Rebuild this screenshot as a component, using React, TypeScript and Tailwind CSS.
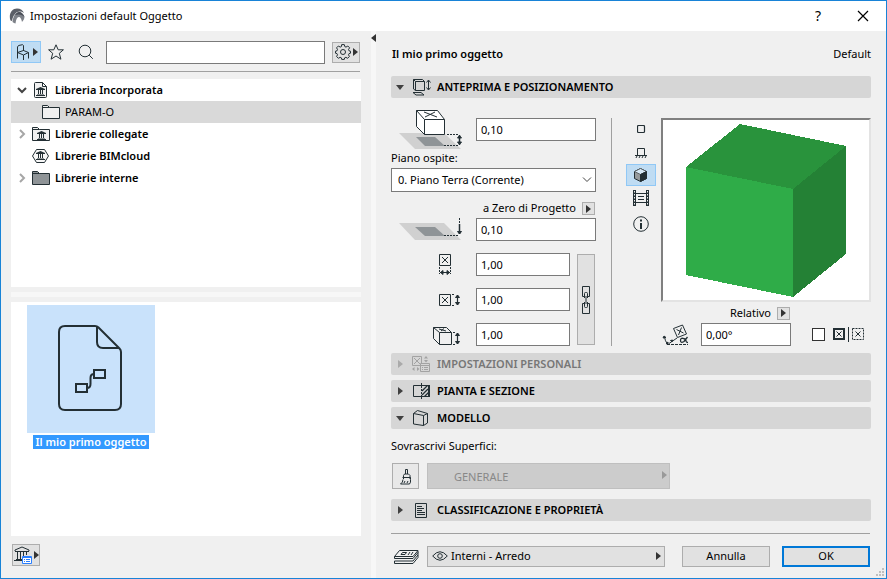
import React from "react";
import { clsx } from "clsx";

type IconProps = {
  w: number;
  h: number;
  className?: string;
  children: React.ReactNode;
};

const Icon = ({ w, h, className, children }: IconProps) => (
  <svg
    width={w}
    height={h}
    viewBox={`0 0 ${w} ${h}`}
    fill="none"
    stroke="currentColor"
    aria-hidden="true"
    className={clsx("shrink-0", className)}
  >
    {children}
  </svg>
);

const Right = ({ className }: { className?: string }) => (
  <Icon w={5} h={8} className={className}>
    <path d="M0 0v8l5-4z" fill="currentColor" stroke="none" />
  </Icon>
);

const Museum = ({ x, y }: { x: number; y: number }) => (
  <g transform={`translate(${x} ${y})`}>
    <path d="M0 3V2l4.500-2L9 2v1z" fill="currentColor" stroke="none" />
    <path d="M2.500 3v4M4.500 3v4M6.500 3v4M0 8.500h9" />
    <path d="M1 7.500h7" strokeOpacity=".5" />
  </g>
);

const LogoIcon = () => (
  <Icon w={16} h={16}>
    <path d="M1.500 12.500C-.8 6 3 .5 8 .5c3.500 0 6 2 7 4.500C10 1.500 4.500 4.500 3 13z" fill="#5b5f67" stroke="none" />
    <path d="M3.500 14C4 8 7 4 10 4c2.500 0 4.500 2 5.500 5-.3 2-1 3.500-2.500 5-.5-3-1.500-5-3.200-5S7 11.500 6.500 15.500q-1.500-.3-3-1.500z" fill="#7d8188" stroke="none" />
    <path d="M6 7c1.500-2 2.800-3 4-3 2.500 0 4.500 2 5.500 5-2-2-5-3.500-9.500-2z" fill="#4b4f58" stroke="none" />
  </Icon>
);

const ChairIcon = () => (
  <Icon w={14} h={16}>
    <path d="M2.500 14.500V3l1-1.500 4-.8 1 .8V7M2.500 8.500l6-2 5 2-5 2.500zM8.500 11v5M13.500 8.500v6" />
  </Icon>
);

const StarIcon = () => (
  <Icon w={16} h={16}>
    <path d="M8 .8l2.200 5h5.200l-4.100 3.500 1.600 5.900L8 12l-4.900 3.200 1.600-5.900L.6 5.800h5.200z" />
  </Icon>
);

const SearchIcon = () => (
  <Icon w={16} h={16}>
    <circle cx="7" cy="7" r="5.800" />
    <path d="M11.200 11.200l3.600 3.600" />
  </Icon>
);

const GearIcon = () => (
  <Icon w={16} h={16}>
    <circle cx="8" cy="8" r="2.500" />
    <path d="M6.700.6h2.600l.5 2 1.200.5 1.800-1.100 1.800 1.800L13.500 5.600l.5 1.200 1.500.4v2l-1.500.4-.5 1.200.9 1.700-1.800 1.800-1.700-1-1.200.5-.4 1.600H6.700l-.4-1.600-1.200-.5-1.700 1-1.800-1.800.9-1.700L2 9.600.5 9.200v-2L2 6.800l.5-1.200-.9-1.800L3.400 2l1.800 1.100 1.200-.5z" />
  </Icon>
);

const DocMuseumIcon = () => (
  <Icon w={20} h={18}>
    <path d="M3.500 2.500q0-1 1-1h7l4 4v10q0 1-1 1h-10q-1 0-1-1zM11.500 1.500v4h4" fill="#f2f2f2" />
    <Museum x={5} y={6} />
  </Icon>
);

const FolderIcon = ({ fill = "#f0f0f0", museum = false }) => (
  <Icon w={20} h={18}>
    <path d="M1.500 15.500v-13h5l2 2h10v11z" fill={fill} />
    <path d="M1.500 4.500h7" />
    {museum && <Museum x={6} y={6} />}
  </Icon>
);

const HexMuseumIcon = () => (
  <Icon w={20} h={18}>
    <path d="M5.500 2.500h8l4 6.500-4 6.500h-8L1.500 9z" fill="#f7f7f7" />
    <Museum x={5} y={4} />
  </Icon>
);

const LibraryManagerIcon = () => (
  <Icon w={20} h={19}>
    <path d="M1 5V4l7-3 7 3v1M1 5.500h14M3.500 6v7M6.500 6v7M9.500 6v7M12.500 6v3M2 13.500h7M0 14.500h9" />
    <path d="M8.500 10.500h9v7h-9z" fill="#fff" stroke="#2a7fff" />
    <path d="M8.500 11.500h9M10 13.500h1M12 13.500h4M10 15.500h1M12 15.500h4" stroke="#2a7fff" />
  </Icon>
);

const ObjectFileIcon = () => (
  <Icon w={64} h={86}>
    <g strokeWidth="2">
      <path d="M7 1h30q2 0 3.500 1.500l21 21Q63 25 63 27v52q0 6-6 6H7q-6 0-6-6V7q0-6 6-6z" />
      <path d="M39 2v15q0 6 6 6h16M18 59h11v8H18zM36 45h11v8H36zM29 63q3.500 0 3.500-4v-6q0-4 3.500-4" />
    </g>
  </Icon>
);

const PreviewHeaderIcon = () => (
  <Icon w={20} h={18}>
    <path d="M4.500 3.500h9v9h-9zM2.500 11V1.500h9l2 2M2.500 1.500l2 2M2.500 11l2 1.500M2 14.500h8l3 2.500H5z" />
    <path d="M17.500 2.500v9M15.500 4.500l2-2.500 2 2.500M15.500 9.500l2 2.500 2-2.500" />
  </Icon>
);

const PersonalIcon = () => (
  <Icon w={20} h={18}>
    <path d="M1.500 1.500h9v9h-9zM3 3l6 6M9 3L3 9" />
    <path d="M13 3.500L15 1l2 2.500zM13 5l2 2.500L17 5zM3.500 12v4L1 14zM6 12v4l2.500-2z" fill="currentColor" stroke="none" />
    <path d="M9.500 8.500h9v8h-9z" fill="#d6d6d6" />
    <path d="M9.500 10.500h9M11 12.500h1M13 12.500h4M11 14.500h1M13 14.500h4" />
  </Icon>
);

const PlanSectionIcon = () => (
  <Icon w={20} h={18}>
    <path d="M10 3.500H2.500v11H10" />
    <path d="M10.500 1v3M10.500 14v3" />
    <path d="M10.500 4v10" strokeDasharray="2 1" />
    <path d="M10 3.500h8M10 14.500h8" />
    <path d="M18 3v12" strokeWidth="2" />
    <path d="M11 9l5.500-5.500M11 13l6-6M13.500 14.500l4-4" strokeWidth="1.300" />
  </Icon>
);

const ModelIcon = () => (
  <Icon w={20} h={18}>
    <path d="M2.500 4.500l10 2v10l-10-1.500zM12.500 6.500l4-2v9.500l-4 2.500M2.500 4.500l4-3 10 3" />
  </Icon>
);

const ListIcon = () => (
  <Icon w={20} h={18}>
    <path d="M4.500 2.500h11v14h-11zM6 5.500h5M6 7.500h7M6 9.500h5M6 11.500h8M6 13.500h8" />
  </Icon>
);

const ElevationIcon = () => (
  <Icon w={64} h={41}>
    <path d="M0 24h45l17 16H16z" fill="#d0d0d0" stroke="none" />
    <path d="M17 28h19l10 9H26z" fill="#8f9497" stroke="none" />
    <path d="M17.500 1.500h21l7 9v15h-20l-8-8z" fill="#fff" />
    <path d="M17.500 1.500l8 9v15M25.500 10.500h20M25 3l13 5M36 3L26 8" />
    <path d="M48 25.500h11M45 36.500h14" strokeDasharray="2 1" />
    <path d="M60.500 26v10" strokeWidth="1.500" />
    <path d="M58.500 29l2-2.500 2 2.500zM58.500 33l2 2.500 2-2.500z" fill="currentColor" />
  </Icon>
);

const ProjectZeroIcon = () => (
  <Icon w={64} h={23}>
    <path d="M0 5h45l17 17H16z" fill="#d0d0d0" stroke="none" />
    <path d="M16 9h20l10 9H26z" fill="#8f9497" stroke="none" />
    <path d="M45 17.500h14M60.500 0v8" strokeDasharray="2 1" />
    <path d="M60.500 6v10" strokeWidth="1.500" />
    <path d="M58.500 13.500l2 2.500 2-2.500z" fill="currentColor" />
  </Icon>
);

const WidthIcon = () => (
  <Icon w={28} h={23}>
    <path d="M7.500 1.500h11v11h-11zM10 4l6 6M16 4l-6 6" />
    <path d="M7.500 14v7M18.500 14v7" strokeDasharray="2 1" />
    <path d="M8 19.500h10" />
    <path d="M11 17.500l-2.500 2 2.500 2zM15 17.500l2.500 2-2.500 2z" fill="currentColor" />
  </Icon>
);

const DepthIcon = () => (
  <Icon w={28} h={23}>
    <path d="M7.500 6.500h11v11h-11zM10 9l6 6M16 9l-6 6" />
    <path d="M20 6.500h3M20 17.500h3" strokeDasharray="2 1" />
    <path d="M25.500 7v10" strokeWidth="1.200" />
    <path d="M23.500 9.500l2-2.500 2 2.500zM23.500 14.500l2 2.500 2-2.500z" fill="currentColor" />
  </Icon>
);

const HeightIcon = () => (
  <Icon w={28} h={23}>
    <path d="M1.500 4.500h13l5 5v12h-12l-6-6zM1.500 4.500l6 5v12M7.500 9.500h12M7 6l7 2M12 5.500L9 8" />
    <path d="M21 9.500h3M21 21.500h3" strokeDasharray="2 1" />
    <path d="M25.500 10v11" strokeWidth="1.200" />
    <path d="M23.500 12.500l2-2.500 2 2.500zM23.500 18.500l2 2.500 2-2.500z" fill="currentColor" />
  </Icon>
);

const LinkIcon = () => (
  <Icon w={8} h={28}>
    <path d="M2 10.500H.5v-10h7v10H6M2 17.500H.5v10h7v-10H6" />
    <path d="M2.500 12V7.500q0-1 1-1h1q1 0 1 1V12M2.500 16v4.500q0 1 1 1h1q1 0 1-1V16M4 10v8" />
  </Icon>
);

const AngleIcon = () => (
  <Icon w={30} h={23}>
    <path d="M12.500 5.500l9-3.500 4 9-9 3.500zM15.500 6.500l7 3.500M20.500 4.500l-3 7.500" />
    <path d="M3.500 14q.5 4 3 7M8 20.500l8-5.500" />
    <path d="M2 15l1-2 2 1.500zM5 20.500l2 1v-2.500zM9.500 17.500l2-.5-.5 2z" fill="currentColor" />
    <path d="M6 21.500h21" strokeDasharray="3 1" />
    <path d="M26.500 14l-3.500 4.500q-3.500 2-3.500-1t3-2q2.500.5 2.500 2.500 0 1.500 2 1.500" strokeWidth="1.300" />
  </Icon>
);

const MirrorIcon = () => (
  <Icon w={32} h={19}>
    <rect x="1" y="4" width="10" height="10" strokeWidth="2" />
    <path d="M3.500 6.500l5 5M8.500 6.500l-5 5M15.500 2v15" />
    <rect x="19.500" y="3.500" width="11" height="11" strokeDasharray="2 1" />
    <path d="M22.500 6.500l5 5M27.500 6.500l-5 5" />
  </Icon>
);

const BrushIcon = () => (
  <Icon w={14} h={17}>
    <path d="M6.500 6V1.500h2V6M4.500 11V7.500l1-1.500h4l1.500 1.500V11M3.500 9.500h8v2q.5 3-1 4.500H1.500Q4 14.500 4 11.500M5 15l1-2M8 15l1-2" />
  </Icon>
);

const LayersIcon = () => (
  <Icon w={26} h={16}>
    <path d="M6.500 1.500h18.500l-5 6H1.500zM1.500 7.500v2M1.500 9.500H20l5-6M1.500 12h18.500l5-6M1.500 12v2.500H20l5-6V2" />
    <path d="M8 5.500l1.500-2h4l-1.500 2zM15 6l2-3M18 6l2-3" />
  </Icon>
);

const EyeIcon = () => (
  <Icon w={16} h={10}>
    <path d="M.7 5Q8-3.500 15.300 5 8 13.500.7 5z" />
    <circle cx="8" cy="5" r="2.300" />
  </Icon>
);

const FIELD = "h-[23px] border border-[#7a7a7a] bg-white px-1";

const TreeRow = ({
  label,
  icon,
  arrow,
  child,
}: {
  label: string;
  icon: React.ReactNode;
  arrow?: "open" | "closed";
  child?: boolean;
}) => (
  <li>
    <button
      type="button"
      className={clsx(
        "flex h-[22px] w-full items-center text-left",
        child ? "bg-[#d9d9d9] pl-[30px]" : "pl-1 font-semibold"
      )}
    >
      {!child && (
        <span className="mr-0.5 flex w-3.5 justify-center">
          {arrow === "open" && (
            <Icon w={10} h={8} className="text-[#444]">
              <path d="M1 2l4 4 4-4" strokeWidth="2" />
            </Icon>
          )}
          {arrow === "closed" && (
            <Icon w={8} h={10} className="text-[#a6a6a6]">
              <path d="M2 1l4 4-4 4" strokeWidth="2" />
            </Icon>
          )}
        </span>
      )}
      <span className="mr-1 text-[#232f34]">{icon}</span>
      {label}
    </button>
  </li>
);

const Header = ({
  title,
  icon,
  open,
  disabled,
}: {
  title: string;
  icon: React.ReactNode;
  open?: boolean;
  disabled?: boolean;
}) => (
  <h2>
    <button
      type="button"
      aria-expanded={!!open}
      disabled={disabled}
      className={clsx(
        "flex h-[22px] w-full items-center gap-1.5 rounded-xs bg-[#d6d6d6] pl-1 text-left font-semibold",
        disabled && "text-[#777]"
      )}
    >
      <span className={clsx("flex w-2.5 justify-center", disabled ? "text-[#aaa]" : "text-[#404040]")}>
        {open ? (
          <Icon w={8} h={5}>
            <path d="M0 0h8L4 5z" fill="currentColor" stroke="none" />
          </Icon>
        ) : (
          <Right />
        )}
      </span>
      <span className={disabled ? "text-[#a3a3a3]" : "text-[#232f34]"}>{icon}</span>
      {title}
    </button>
  </h2>
);

const PopupButton = ({ label }: { label: string }) => (
  <button
    type="button"
    aria-label={label}
    className="flex size-[13px] items-center justify-center border border-[#adadad] bg-[#e1e1e1] text-[#333]"
  >
    <Right />
  </button>
);

const ViewModes = () => (
  <div className="flex w-[30px] shrink-0 flex-col items-center pt-0.5 text-[#232f34]">
    <button type="button" aria-label="Simbolo 2D" className="flex h-[18px] w-full items-center justify-center">
      <Icon w={9} h={9}>
        <rect x=".5" y=".5" width="7" height="7" rx="1" strokeWidth="1.200" />
      </Icon>
    </button>
    <button type="button" aria-label="Vista laterale" className="mt-1.5 flex h-[18px] w-full items-center justify-center">
      <Icon w={12} h={12}>
        <path d="M2.500 8V1.500h7V8M0 8.500h12M1 11l1-2M4 11l1-2M7 11l1-2M10 11l1-2" />
      </Icon>
    </button>
    <button
      type="button"
      aria-label="Vista 3D"
      aria-pressed="true"
      className="mt-0.5 flex h-[22px] w-full items-center justify-center border border-[#90c8f6] bg-[#bfdcf3]"
    >
      <Icon w={14} h={14}>
        <path d="M6.500.5l6 3v7l-6 3-6-3v-7z" fill="#969a9c" />
        <path d="M6.500.5l6 3-6 3-6-3z" fill="#d7e8f5" stroke="#5d6468" />
        <path d="M6.500 6.500l6-3v7l-6 3z" fill="#232f34" />
      </Icon>
    </button>
    <button type="button" aria-label="Anteprima immagine" className="mt-1 flex h-4 w-full items-center justify-center">
      <Icon w={16} h={16}>
        <path d="M1.500 0v16M14.500 0v16" strokeWidth="3" />
        <path d="M1.500 1v14M14.500 1v14" stroke="#f0f0f0" strokeDasharray="1.500 1.500" />
        <path d="M3 3.500h10M3 12.500h10M5 6.500h6M5 9.500h6" />
      </Icon>
    </button>
    <button type="button" aria-label="Informazioni" className="mt-2.5 flex h-4 w-full items-center justify-center">
      <Icon w={16} h={16}>
        <circle cx="8" cy="8" r="7.300" />
        <path d="M8 3.500v2M8 7v6" strokeWidth="2" />
      </Icon>
    </button>
  </div>
);

const PreviewPanel = () => (
  <section className="flex pt-2.5">
    <div className="w-[205px] shrink-0">
      <label className="flex h-[43px] items-center pl-2 text-[#232f34]">
        <ElevationIcon />
        <input
          aria-label="Elevazione dal piano ospite"
          defaultValue="0,10"
          className={clsx(FIELD, "ml-auto w-[120px] text-black")}
        />
      </label>
      <label htmlFor="story" className="mb-1 block leading-[13px]">
        Piano ospite:
      </label>
      <div className="relative">
        <select id="story" className="block h-6 w-full appearance-none border border-[#7a7a7a] bg-white px-1.5">
          <option>0. Piano Terra (Corrente)</option>
        </select>
        <Icon w={10} h={6} className="pointer-events-none absolute top-[9px] right-1 text-[#444]">
          <path d="M1 .5l4 4 4-4" />
        </Icon>
      </div>
      <div className="mt-2.5 flex h-[13px] items-center justify-end gap-1.5 pr-px">
        <label htmlFor="zero">a Zero di Progetto</label>
        <PopupButton label="Scegli riferimento" />
      </div>
      <div className="mt-[3px] flex items-center pl-2 text-[#232f34]">
        <ProjectZeroIcon />
        <input id="zero" defaultValue="0,10" className={clsx(FIELD, "ml-auto w-[120px] text-black")} />
      </div>
      <div className="mt-3 flex gap-[7px] pl-[41px]">
        <div className="flex flex-1 flex-col gap-3">
          {[
            { name: "Dimensione 1", icon: <WidthIcon /> },
            { name: "Dimensione 2", icon: <DepthIcon /> },
            { name: "Altezza", icon: <HeightIcon /> },
          ].map((d) => (
            <label key={d.name} className="flex items-center justify-between text-[#232f34]">
              {d.icon}
              <input aria-label={d.name} defaultValue="1,00" className={clsx(FIELD, "w-[94px] text-black")} />
            </label>
          ))}
        </div>
        <button
          type="button"
          aria-label="Mantieni proporzioni"
          className="my-px mr-px flex w-[18px] items-center justify-center border border-[#adadad] bg-[#e1e1e1] text-[#232f34]"
        >
          <LinkIcon />
        </button>
      </div>
    </div>

    <div className="mt-2.5 ml-[15px] w-px shrink-0 bg-[#a0a0a0]" />

    <div className="mt-2.5 ml-3.5 flex min-w-0 flex-1 gap-[5px]">
      <ViewModes />
      <div className="min-w-0 flex-1">
        <div className="h-[184px] border-2 border-t-[#808080] border-r-[#e3e3e3] border-b-[#e3e3e3] border-l-[#808080] bg-white">
          <svg viewBox="0 0 206 180" className="h-full w-full" shapeRendering="crispEdges" aria-hidden="true">
            <path d="M77 4l106 22-53 43L23 47z" fill="#29933c" />
            <path d="M23 47l107 22v108L23 155z" fill="#2fac48" />
            <path d="M130 69l53-43v108l-53 43z" fill="#248135" />
          </svg>
        </div>
        <div className="mt-1 flex h-[14px] w-[129px] items-center justify-end gap-1.5">
          <label htmlFor="angle">Relativo</label>
          <PopupButton label="Scegli tipo di angolo" />
        </div>
        <div className="mt-[3px] flex items-center text-[#232f34]">
          <AngleIcon />
          <input id="angle" defaultValue="0,00°" className={clsx(FIELD, "ml-2.5 w-[90px] text-black")} />
          <label className="ml-[21px] flex items-center gap-2">
            <input
              type="checkbox"
              aria-label="Rispecchia"
              className="size-[13px] appearance-none border border-[#333] bg-white"
            />
            <MirrorIcon />
          </label>
        </div>
      </div>
    </div>
  </section>
);

const Sidebar = () => (
  <aside className="flex w-[370px] shrink-0 flex-col pr-2.5 pb-3 pl-2.5">
    <div className="mr-px flex h-[41px] items-center border-b border-[#a0a0a0] pt-0.5 text-[#232f34]">
      <button
        type="button"
        aria-label="Oggetti"
        className="flex h-[22px] w-[30px] items-center justify-center gap-1 border border-[#90c8f6] bg-[#bfdcf3]"
      >
        <ChairIcon />
        <Right className="text-[#333]" />
      </button>
      <button type="button" aria-label="Preferiti" className="ml-[7px]">
        <StarIcon />
      </button>
      <label htmlFor="search" className="ml-3.5">
        <SearchIcon />
      </label>
      <input
        id="search"
        aria-label="Cerca"
        className="ml-3 h-[23px] min-w-0 flex-1 border border-[#7a7a7a] bg-white px-1"
      />
      <button
        type="button"
        aria-label="Impostazioni"
        className="ml-[7px] flex h-[21px] w-7 items-center justify-center gap-0.5 border border-[#adadad] bg-[#e1e1e1]"
      >
        <GearIcon />
        <Right className="text-[#333]" />
      </button>
    </div>

    <ul className="mt-[7px] h-[208px] bg-white">
      <TreeRow label="Libreria Incorporata" icon={<DocMuseumIcon />} arrow="open" />
      <TreeRow label="PARAM-O" icon={<FolderIcon />} child />
      <TreeRow label="Librerie collegate" icon={<FolderIcon museum />} arrow="closed" />
      <TreeRow label="Librerie BIMcloud" icon={<HexMuseumIcon />} />
      <TreeRow label="Librerie interne" icon={<FolderIcon fill="#8f9497" />} arrow="closed" />
    </ul>
    <div className="my-[5px] h-[5px] bg-[#f7f7f7]" />
    <div className="flex-1 bg-white px-4 pt-[3px]">
      <button type="button" className="flex w-32 flex-col items-center gap-0.5">
        <span className="flex size-32 items-center justify-center bg-[#c9e2fb] pr-0.5 pb-0.5 text-[#232f34]">
          <ObjectFileIcon />
        </span>
        <span className="bg-[#3399ff] px-0.5 leading-[14px] font-semibold whitespace-nowrap text-white">
          Il mio primo oggetto
        </span>
      </button>
    </div>
    <button
      type="button"
      aria-label="Gestione librerie"
      className="mt-2 ml-px flex h-[22px] w-7 items-center justify-center border border-[#adadad] bg-[#e1e1e1] text-[#232f34]"
    >
      <LibraryManagerIcon />
      <Right className="text-[#333]" />
    </button>
  </aside>
);

export default function App() {
  return (
    <div className="relative flex min-h-screen flex-col border border-[#1883d7] bg-[#f0f0f0] font-['Noto_Sans','Open_Sans',sans-serif] text-[11px] text-black">
      <header className="flex h-[30px] items-center bg-white pr-[17px] pl-2">
        <LogoIcon />
        <h1 className="ml-[5px]">Impostazioni default Oggetto</h1>
        <button type="button" className="ml-auto w-4 text-sm leading-none">
          ?
        </button>
        <button type="button" aria-label="Chiudi" className="ml-[31px]">
          <Icon w={12} h={12}>
            <path d="M1 1l10 10M11 1L1 11" strokeWidth="1.200" />
          </Icon>
        </button>
      </header>

      <div className="flex flex-1">
        <Sidebar />
        <div className="w-[5px] shrink-0 bg-[#f7f7f7] pt-[3px]">
          <button type="button" aria-label="Comprimi pannello" className="block text-[#333]">
            <Right className="rotate-180" />
          </button>
        </div>

        <main className="min-w-0 flex-1 px-[15px] pb-2.5">
          <div className="flex h-[45px] items-center justify-between pt-0.5 pl-px">
            <span className="font-semibold">Il mio primo oggetto</span>
            <span>Default</span>
          </div>

          <Header title="ANTEPRIMA E POSIZIONAMENTO" icon={<PreviewHeaderIcon />} open />
          <PreviewPanel />

          <div className="mt-[7px] flex flex-col gap-[5px]">
            <Header title="IMPOSTAZIONI PERSONALI" icon={<PersonalIcon />} disabled />
            <Header title="PIANTA E SEZIONE" icon={<PlanSectionIcon />} />
            <Header title="MODELLO" icon={<ModelIcon />} open />
          </div>

          <section className="pt-[9px] pb-2.5">
            <label htmlFor="surface" className="block leading-4">
              Sovrascrivi Superfici:
            </label>
            <div className="mt-[9px] flex gap-2 pl-px">
              <button
                type="button"
                aria-label="Sovrascrivi superfici"
                className="flex h-[26px] w-[27px] items-center justify-center border border-[#adadad] bg-[#e8e8e8] text-[#232f34]"
              >
                <BrushIcon />
              </button>
              <div className="relative w-[243px]">
                <select
                  id="surface"
                  disabled
                  className="block h-[26px] w-full appearance-none border border-[#bfbfbf] bg-[#ccc] pt-0.5 pl-[26px] text-[#888] opacity-100"
                >
                  <option>GENERALE</option>
                </select>
                <Right className="pointer-events-none absolute top-2 right-[3px] text-[#999]" />
              </div>
            </div>
          </section>

          <Header title="CLASSIFICAZIONE E PROPRIETÀ" icon={<ListIcon />} />

          <footer className="mt-3 mr-px flex items-center border-t border-[#a0a0a0] pt-3 pl-0.5 text-[#232f34]">
            <LayersIcon />
            <div className="relative ml-2 w-[238px]">
              <select
                aria-label="Layer"
                className="block h-[21px] w-full appearance-none border border-[#adadad] bg-[#e1e1e1] pl-[23px] text-black"
              >
                <option>Interni - Arredo</option>
              </select>
              <span className="pointer-events-none absolute top-[5px] left-[5px]">
                <EyeIcon />
              </span>
              <Right className="pointer-events-none absolute top-1.5 right-1 text-[#333]" />
            </div>
            <div className="ml-auto flex gap-3 text-black">
              <button type="button" className="h-[21px] w-[88px] border border-[#adadad] bg-[#e1e1e1]">
                Annulla
              </button>
              <button type="button" className="h-[21px] w-[88px] border-2 border-[#0078d7] bg-[#e1e1e1]">
                OK
              </button>
            </div>
          </footer>
        </main>
      </div>

      <Icon w={8} h={8} className="absolute right-0.5 bottom-0.5 text-[#bfbfbf]">
        <path d="M6 1h2M3 4h2M6 4h2M0 7h2M3 7h2M6 7h2" strokeWidth="2" />
      </Icon>
    </div>
  );
}
